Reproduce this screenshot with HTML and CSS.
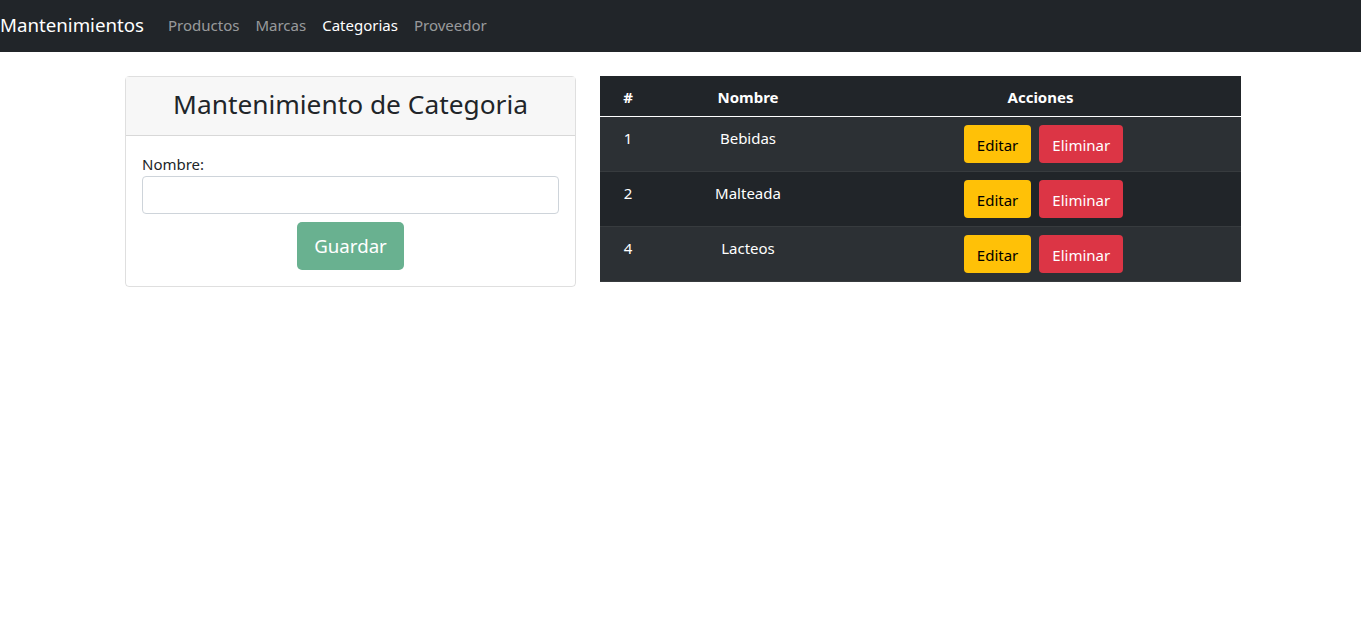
FILE: index.html
```html
<!DOCTYPE html>
<html lang="es">
<head>
<meta charset="utf-8">
<title>Mantenimientos</title>
<link rel="stylesheet" href="styles.css">
</head>
<body>
<nav class="navbar">
  <a class="brand" href="#">Mantenimientos</a>
  <ul class="nav">
    <li><a class="nav-link" href="#">Productos</a></li>
    <li><a class="nav-link" href="#">Marcas</a></li>
    <li><a class="nav-link active" href="#">Categorias</a></li>
    <li><a class="nav-link" href="#">Proveedor</a></li>
  </ul>
</nav>
<main class="content">
  <section class="card">
    <div class="card-header"><h2 class="card-title">Mantenimiento de Categoria</h2></div>
    <div class="card-body">
      <label class="form-label" for="nombre">Nombre:</label>
      <input class="form-control" id="nombre" type="text">
      <div class="actions">
        <button class="btn btn-lg btn-success" disabled>Guardar</button>
      </div>
    </div>
  </section>
  <table class="table">
    <thead>
      <tr><th class="col-id">#</th><th class="col-name">Nombre</th><th>Acciones</th></tr>
    </thead>
    <tbody>
      <tr class="odd"><td class="txt">1</td><td class="txt">Bebidas</td><td><div class="btns"><button class="btn btn-warning">Editar</button><button class="btn btn-danger">Eliminar</button></div></td></tr>
      <tr><td class="txt">2</td><td class="txt">Malteada</td><td><div class="btns"><button class="btn btn-warning">Editar</button><button class="btn btn-danger">Eliminar</button></div></td></tr>
      <tr class="odd"><td class="txt">4</td><td class="txt">Lacteos</td><td><div class="btns"><button class="btn btn-warning">Editar</button><button class="btn btn-danger">Eliminar</button></div></td></tr>
    </tbody>
  </table>
</main>
</body>
</html>
```

FILE: styles.css
```css
* { box-sizing: border-box; }
body {
  margin: 0;
  font-family: "Segoe UI", "Noto Sans", "Open Sans", sans-serif;
  font-size: 15px;
  line-height: 24px;
  color: #212529;
  background: #fff;
}
.navbar {
  height: 52px;
  padding-bottom: 2px;
  background: #212529;
  display: flex;
  align-items: center;
}
.brand {
  color: #fff;
  font-size: 18.7px;
  line-height: 30px;
  text-decoration: none;
  margin-right: 16px;
}
.nav {
  list-style: none;
  margin: 0;
  padding: 0;
  display: flex;
}
.nav-link {
  display: block;
  padding: 8px 8px;
  color: rgba(255,255,255,.55);
  text-decoration: none;
}
.nav-link.active { color: #fff; }
.content {
  display: flex;
  gap: 24px;
  padding: 24px 0 0 125px;
  align-items: flex-start;
}
.card {
  width: 451px;
  border: 1px solid rgba(0,0,0,.125);
  border-radius: 4px;
}
.card-header {
  background: #f7f7f7;
  border-bottom: 1px solid rgba(0,0,0,.125);
  padding: 6px 16px 10px;
  text-align: center;
}
.card-title {
  margin: 0;
  font-size: 26.3px;
  font-weight: 400;
  line-height: 42px;
}
.card-body {
  padding: 16px;
}
.form-label {
  display: block;
  line-height: 24px;
}
.form-control {
  display: block;
  width: 100%;
  height: 38px;
  border: 1px solid #ced4da;
  border-radius: 4px;
  font: inherit;
  padding: 6px 12px;
}
.actions {
  display: flex;
  justify-content: center;
  margin-top: 8px;
}
.btn {
  font: inherit;
  border: 1px solid transparent;
  border-radius: 4px;
  padding: 7px 12px 5px;
  line-height: 24px;
}
.btn-lg {
  font-size: 18.7px;
  padding: 8px 16px;
  line-height: 30px;
  border-radius: 5px;
}
.btn-success {
  background: #69b190;
  color: #fff;
}
.btn-warning { background: #ffc107; color: #000; }
.btn-danger { background: #dc3545; color: #fff; }
.table {
  width: 641px;
  border-collapse: collapse;
  color: #fff;
  background: #212529;
  text-align: center;
}
.table th {
  font-weight: 700;
  padding: 9px 8px 7px;
  line-height: 24px;
  border-bottom: 1px solid #fff;
}
.table td {
  padding: 8px;
  line-height: 24px;
  vertical-align: top;
  border-bottom: 1px solid #373b3e;
}
.table td.txt { padding: 9px 8px 7px; }
.table tr.odd td { background: #2c3034; }
.col-id { width: 56px; }
.col-name { width: 184px; }
.btns {
  display: flex;
  gap: 8px;
  justify-content: center;
  padding-left: 6px;
}
```
